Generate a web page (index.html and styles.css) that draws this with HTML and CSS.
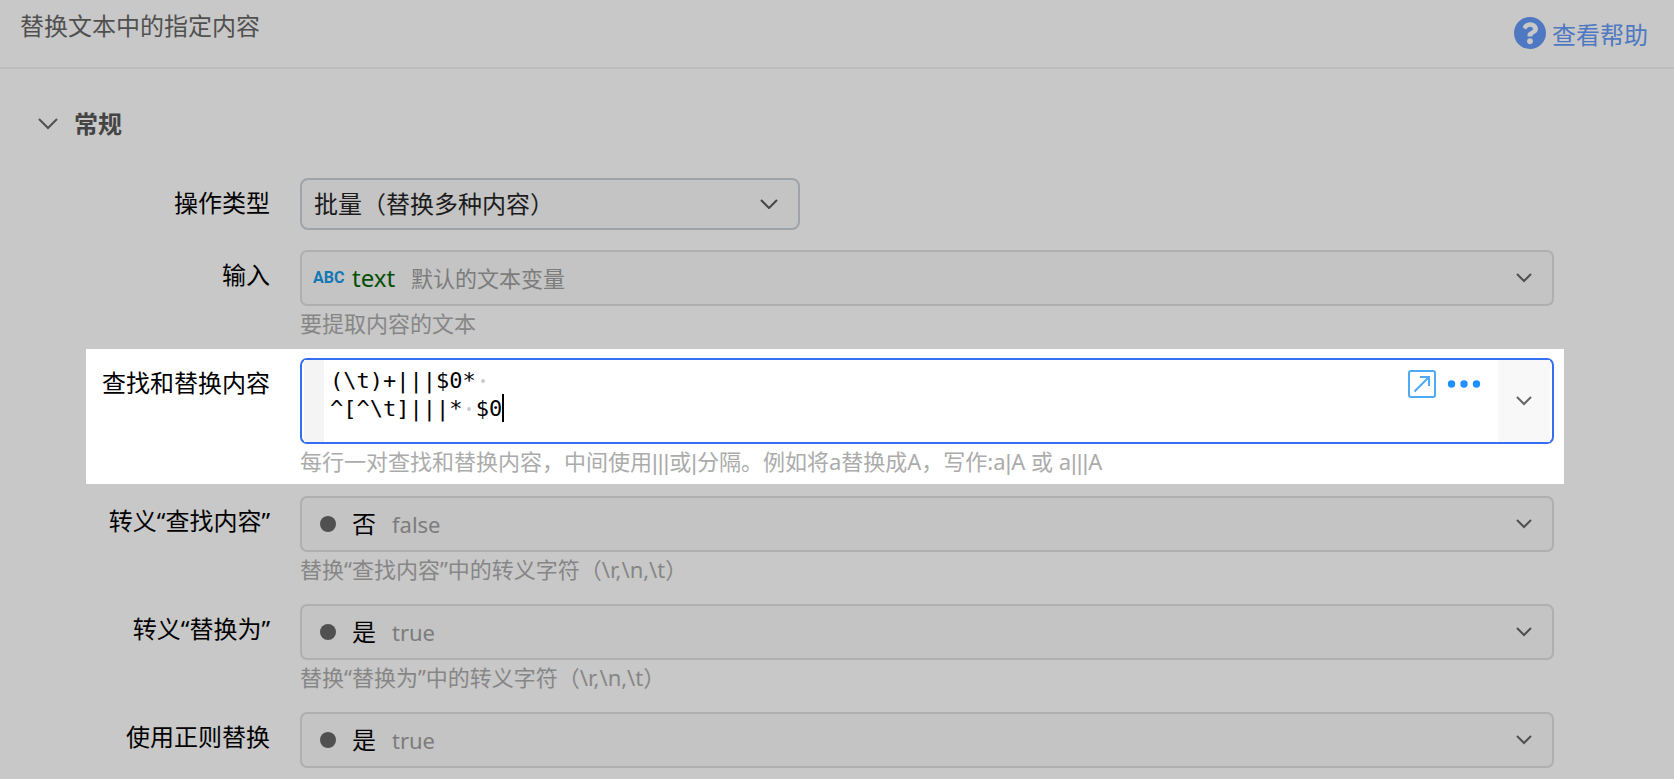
FILE: index.html
```
<!DOCTYPE html>
<html lang="zh-CN">
<head>
<meta charset="utf-8">
<title>替换文本中的指定内容</title>
<meta name="viewport" content="width=device-width, initial-scale=1">
<link rel="stylesheet" href="styles.css">
</head>
<body>
<header class="header">
  <h1 class="header-title">替换文本中的指定内容</h1>
  <a class="help-link" href="#help">
    <svg class="help-icon" viewBox="8 8 496 496" aria-hidden="true"><path fill="currentColor" d="M504 256c0 137-111 248-248 248S8 393 8 256 119 8 256 8s248 111 248 248zM262.700 90c-54.500 0-89.300 23-116.500 63.800-3.500 5.300-2.400 12.400 2.700 16.300l34.700 26.300c5.200 3.900 12.600 3 16.700-2.100 17.900-22.700 30.100-35.800 57.300-35.800 20.400 0 45.700 13.100 45.700 33 0 15-12.400 22.700-32.500 34C247.100 238.500 216 254.900 216 296v4c0 6.600 5.400 12 12 12h56c6.600 0 12-5.400 12-12v-1.300c0-28.500 83.200-29.600 83.200-106.700 0-58-60.200-102-116.500-102zM256 338c-25.400 0-46 20.600-46 46s20.600 46 46 46 46-20.600 46-46-20.600-46-46-46z"/></svg>
    <span>查看帮助</span>
  </a>
</header>

<main class="panel">
  <h2 class="section">
    <button class="section-toggle" type="button" aria-expanded="true">
      <svg class="section-chevron" viewBox="0 0 20 12" aria-hidden="true"><path d="M1 1l9 9 9-9"/></svg>
      <span>常规</span>
    </button>
  </h2>

  <form class="form">
    <div class="row row-type">
      <label class="label" for="type">操作类型</label>
      <div class="select-wrap">
        <select class="select" id="type"><option>批量（替换多种内容）</option></select>
        <svg class="select-chevron" viewBox="0 0 18 10" aria-hidden="true"><path d="M1 1l8 8 8-8"/></svg>
      </div>
    </div>

    <div class="row">
      <span class="label" id="l-input">输入</span>
      <div class="control">
        <button class="field" type="button" aria-labelledby="l-input v-input">
          <span class="value" id="v-input"><span class="abc">ABC</span><span class="var-name">text</span><span class="note">默认的文本变量</span></span>
          <span class="drop"><svg class="chevron" viewBox="0 0 16 10" aria-hidden="true"><path d="M1 1l7 7 7-7"/></svg></span>
        </button>
        <p class="hint">要提取内容的文本</p>
      </div>
    </div>

    <div class="row row-active">
      <label class="label" for="pairs">查找和替换内容</label>
      <div class="control">
        <div class="editor">
          <span class="gutter"></span>
          <div class="code">
            <textarea class="code-text" id="pairs" rows="2" spellcheck="false" wrap="off">(\t)+|||$0* 
^[^\t]|||* $0</textarea>
            <span class="space-mark space-first"></span>
            <span class="space-mark space-second"></span>
            <span class="caret"></span>
          </div>
          <div class="tools">
            <button class="tool" type="button" aria-label="展开">
              <svg class="icon-expand" viewBox="0 0 28 28" aria-hidden="true"><rect x="1" y="1" width="26" height="26" rx="2"/><path d="M6.500 21.500L21 7M12 7h9v9"/></svg>
            </button>
            <button class="tool" type="button" aria-label="更多">
              <svg class="icon-more" viewBox="0 0 34 28" aria-hidden="true"><circle cx="4.500" cy="14" r="3.700"/><circle cx="17" cy="14" r="3.700"/><circle cx="29.500" cy="14" r="3.700"/></svg>
            </button>
          </div>
          <button class="drop drop-active" type="button" aria-label="选择变量"><svg class="chevron" viewBox="0 0 16 10" aria-hidden="true"><path d="M1 1l7 7 7-7"/></svg></button>
        </div>
        <p class="hint">每行一对查找和替换内容，中间使用<span class="bar">|||</span>或<span class="bar">|</span>分隔。例如将a替换成A，写作:a<span class="bar">|</span>A 或 a<span class="bar">|||</span>A</p>
      </div>
    </div>

    <div class="row">
      <span class="label" id="l-find">转义“查找内容”</span>
      <div class="control">
        <button class="field" type="button" aria-labelledby="l-find v-find">
          <span class="value" id="v-find"><span class="dot"></span><span class="choice">否</span><span class="note">false</span></span>
          <span class="drop"><svg class="chevron" viewBox="0 0 16 10" aria-hidden="true"><path d="M1 1l7 7 7-7"/></svg></span>
        </button>
        <p class="hint">替换“查找内容”中的转义字符（\r,\n,\t）</p>
      </div>
    </div>

    <div class="row">
      <span class="label" id="l-replace">转义“替换为”</span>
      <div class="control">
        <button class="field" type="button" aria-labelledby="l-replace v-replace">
          <span class="value" id="v-replace"><span class="dot"></span><span class="choice">是</span><span class="note">true</span></span>
          <span class="drop"><svg class="chevron" viewBox="0 0 16 10" aria-hidden="true"><path d="M1 1l7 7 7-7"/></svg></span>
        </button>
        <p class="hint">替换“替换为”中的转义字符（\r,\n,\t）</p>
      </div>
    </div>

    <div class="row">
      <span class="label" id="l-regex">使用正则替换</span>
      <div class="control">
        <button class="field" type="button" aria-labelledby="l-regex v-regex">
          <span class="value" id="v-regex"><span class="dot"></span><span class="choice">是</span><span class="note">true</span></span>
          <span class="drop"><svg class="chevron" viewBox="0 0 16 10" aria-hidden="true"><path d="M1 1l7 7 7-7"/></svg></span>
        </button>
      </div>
    </div>
  </form>
</main>
</body>
</html>
```
FILE: styles.css
```
* {
  box-sizing: border-box;
}

body {
  margin: 0;
  background: #c8c8c8;
  color: #000;
  font-family: "Noto Sans", "Noto Sans CJK SC", sans-serif;
  font-size: 24px;
  line-height: 32px;
}

h1, h2, p {
  margin: 0;
}

button, select, textarea {
  margin: 0;
  padding: 0;
  border: 0;
  background: none;
  color: inherit;
  font: inherit;
}

svg {
  display: block;
  flex: none;
}

svg path {
  stroke-width: 2;
}

/* Header */
.header {
  display: flex;
  justify-content: space-between;
  align-items: flex-start;
  padding: 10px 26px 16px 20px;
  border-bottom: 2px solid #bdbdbd;
}

.header-title {
  color: #505050;
  font-size: 24px;
  font-weight: 400;
}

.help-link {
  display: flex;
  gap: 6px;
  padding-top: 9px;
  color: #4f78c2;
  text-decoration: none;
}

.help-icon {
  width: 32px;
  height: 32px;
  margin-top: -2px;
}

/* Section heading */
.section {
  padding: 39px 38px 0;
  font-size: 24px;
}

.section-toggle {
  display: flex;
  align-items: center;
  gap: 16px;
  color: #444;
  font-weight: 700;
}

.section-chevron {
  width: 20px;
  height: 12px;
  fill: none;
  stroke: #505050;
}

/* Form rows */
.form {
  display: grid;
  gap: 14px;
  padding: 38px 120px 11px 96px;
}

.row {
  display: grid;
  grid-template-columns: 174px minmax(0, 1fr);
  column-gap: 30px;
}

.row-type {
  margin-bottom: 6px;
}

.row-active {
  margin: -9px -10px -2px;
  padding: 9px 10px 2px;
  background: #fff;
}

.label {
  line-height: 50px;
  text-align: right;
  white-space: nowrap;
}

.hint {
  padding: 1px 0 5px;
  color: #868686;
  font-size: 22px;
}

.row-active .hint {
  color: #ababab;
}

.bar {
  font-family: "Liberation Sans", sans-serif;
  line-height: 1;
}

.select-wrap {
  position: relative;
  max-width: 500px;
}

.select {
  display: block;
  width: 100%;
  height: 52px;
  padding: 0 48px 0 12px;
  border: 2px solid #9fa4a9;
  border-radius: 8px;
  background: #c4c4c4;
  color: #1c1c1c;
  appearance: none;
}

.select-chevron {
  position: absolute;
  top: 21px;
  right: 22px;
  width: 18px;
  height: 10px;
  fill: none;
  stroke: #454545;
  pointer-events: none;
}

.field {
  display: flex;
  justify-content: space-between;
  width: 100%;
  height: 56px;
  border: 2px solid #afafaf;
  border-radius: 7px;
  background: #c4c4c4;
  text-align: left;
}

.value {
  display: flex;
  align-items: center;
  padding-left: 11px;
}

.abc {
  width: 39px;
  color: #1277b5;
  font-family: Roboto, sans-serif;
  font-size: 16px;
  font-weight: 700;
}

.var-name {
  color: #034f03;
}

.note {
  margin-left: 16px;
  color: #7c7c7c;
  font-size: 22px;
}

.dot {
  width: 16px;
  height: 16px;
  margin: 0 16px 0 7px;
  border-radius: 50%;
  background: #505050;
}

.drop {
  display: flex;
  align-items: center;
  justify-content: center;
  width: 52px;
  margin-right: 2px;
}

.chevron {
  width: 16px;
  height: 10px;
  fill: none;
  stroke: #505050;
}

/* Code editor */
.editor {
  display: flex;
  height: 86px;
  padding: 0 2px;
  border: 2px solid #346ef2;
  border-radius: 7px;
}

.gutter {
  width: 20px;
  background: #f4f4f4;
}

.code {
  position: relative;
  flex: 1;
  padding: 7px 0 0 6px;
  font-family: "DejaVu Sans Mono", monospace;
  font-size: 22px;
  line-height: 28px;
}

.code-text {
  display: block;
  width: 100%;
  height: 56px;
  overflow: hidden;
  outline: 0;
  resize: none;
  caret-color: transparent;
}

.space-mark {
  position: absolute;
  width: 4px;
  height: 4px;
  border-radius: 50%;
  background: #ccc;
}

.space-first {
  top: 19px;
  left: calc(11ch + 11px);
}

.space-second {
  top: 47px;
  left: calc(10ch + 11px);
}

.caret {
  position: absolute;
  top: 34px;
  left: calc(13ch + 6px);
  width: 2px;
  height: 28px;
  background: #000;
}

.tools {
  display: flex;
  align-items: flex-start;
  gap: 11px;
  padding: 10px 17px 0 0;
}

.icon-expand {
  width: 28px;
  height: 28px;
  fill: none;
  stroke: #50aaf6;
  stroke-width: 2;
}

.icon-more {
  width: 34px;
  height: 28px;
  fill: #1e90ff;
}

.drop-active {
  margin: 0;
  background: #f8f8f8;
}

.drop-active .chevron {
  stroke: #666;
}
```
